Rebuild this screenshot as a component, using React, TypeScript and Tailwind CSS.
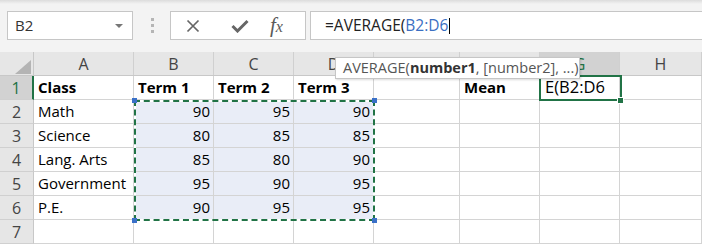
import React from 'react';

const cols = [
  { key: 'A', w: 'w-[100px]' },
  { key: 'B', w: 'w-[80px]' },
  { key: 'C', w: 'w-[80px]' },
  { key: 'D', w: 'w-[80px]' },
  { key: 'E', w: 'w-[86px]' },
  { key: 'F', w: 'w-[80px]' },
  { key: 'G', w: 'w-[80px]' },
  { key: 'H', w: 'w-[82px]' },
];

type Cell = { text?: string; bold?: boolean; num?: boolean; edit?: boolean };

const rows: Cell[][] = [
  [{ text: 'Class', bold: true }, { text: 'Term 1', bold: true }, { text: 'Term 2', bold: true }, { text: 'Term 3', bold: true }, {}, { text: 'Mean', bold: true }, { text: 'E(B2:D6', edit: true }, {}],
  [{ text: 'Math' }, { text: '90', num: true }, { text: '95', num: true }, { text: '90', num: true }, {}, {}, {}, {}],
  [{ text: 'Science' }, { text: '80', num: true }, { text: '85', num: true }, { text: '85', num: true }, {}, {}, {}, {}],
  [{ text: 'Lang. Arts' }, { text: '85', num: true }, { text: '80', num: true }, { text: '90', num: true }, {}, {}, {}, {}],
  [{ text: 'Government' }, { text: '95', num: true }, { text: '90', num: true }, { text: '95', num: true }, {}, {}, {}, {}],
  [{ text: 'P.E.' }, { text: '90', num: true }, { text: '95', num: true }, { text: '95', num: true }, {}, {}, {}, {}],
  [{}, {}, {}, {}, {}, {}, {}, {}],
];

const FormulaBar = () => (
  <div className="h-[52px] bg-[#f3f3f3]">
    <div className="h-[4px] bg-gradient-to-b from-[#dcdcdc] to-[#f3f3f3]" />
    <div className="flex items-center pt-[7px]">
      <div className="ml-[7px] w-[126px] h-[29px] bg-white border border-[#c6c6c6] flex items-center justify-between pl-[7px] pr-[9px]">
        <span className="text-[15px] text-[#333]">B2</span>
        <span className="w-0 h-0 border-l-[4px] border-r-[4px] border-t-[4px] border-l-transparent border-r-transparent border-t-[#777]" />
      </div>
      <div className="ml-[18px] w-[2px] flex flex-col gap-[3px]">
        <span className="w-[3px] h-[3px] bg-[#b5b5b5]" />
        <span className="w-[3px] h-[3px] bg-[#b5b5b5]" />
        <span className="w-[3px] h-[3px] bg-[#b5b5b5]" />
      </div>
      <div className="ml-[17px] w-[136px] h-[29px] bg-white border border-[#c6c6c6] flex items-center">
        <svg className="ml-[15px]" width="14" height="14" viewBox="0 0 14 14">
          <path d="M1.5 1.5 L12.5 12.5 M12.5 1.5 L1.5 12.5" stroke="#666" strokeWidth="1.7" fill="none" />
        </svg>
        <svg className="ml-[31px]" width="18" height="14" viewBox="0 0 18 14">
          <path d="M1.5 7 L6.5 12 L16.5 2" stroke="#666" strokeWidth="3" fill="none" />
        </svg>
        <span className="ml-[21px] text-[21px] italic text-[#5a5a5a] font-['Liberation_Serif',serif] leading-none">
          f<span className="text-[16px]">x</span>
        </span>
      </div>
      <div className="ml-[4px] flex-1 h-[29px] bg-white border border-r-0 border-[#c6c6c6] flex items-center pl-[14px] text-[15.5px]">
        <span className="text-[#222]">=AVERAGE(</span>
        <span className="text-[#3b6fc2]">B2:D6</span>
        <span className="ml-[1px] w-[1px] h-[16px] bg-black" />
      </div>
    </div>
  </div>
);

const Grid = () => (
  <div>
    <div className="flex h-[24px] bg-[#e6e6e6] border-b border-[#c8c8c8]">
      <div className="w-[34px] border-r border-[#c8c8c8] relative">
        <svg className="absolute left-[15px] top-[8px]" width="16" height="14" viewBox="0 0 16 14">
          <path d="M16 0 L16 14 L0 14 Z" fill="#b4b4b4" />
        </svg>
      </div>
      {cols.map((c) => (
        <div
          key={c.key}
          className={`${c.w} border-r border-[#d0d0d0] flex items-center justify-center text-[16px] ${c.key === 'G' ? 'bg-[#d2d2d2] text-[#217346]' : 'text-[#444]'}`}
        >
          {c.key}
        </div>
      ))}
    </div>
    {rows.map((r, i) => (
      <div key={i} className="flex h-[24px]">
        <div
          className={`w-[34px] border-b border-[#d0d0d0] flex items-center justify-center text-[16px] ${i === 0 ? 'bg-[#d2d2d2] text-[#217346] border-r-2 border-r-[#217346]' : 'bg-[#e6e6e6] text-[#444] border-r border-r-[#c8c8c8]'}`}
        >
          {i + 1}
        </div>
        {r.map((cell, j) => {
          const sel = i >= 1 && i <= 5 && j >= 1 && j <= 3;
          return (
            <div
              key={j}
              className={`${cols[j].w} border-r border-b border-[#d4d4d4] flex items-center overflow-visible whitespace-nowrap text-black ${cell.edit ? 'text-[16.5px] pl-[5px]' : 'text-[15px]'} ${sel ? 'bg-[#e9edf7]' : 'bg-white'} ${cell.num ? 'justify-end pr-[3px]' : 'pl-[4px]'} ${cell.bold ? 'font-bold' : ''}`}
            >
              {cell.text}
            </div>
          );
        })}
      </div>
    ))}
  </div>
);

export default function App() {
  return (
    <div className="relative w-[702px] h-[245px] overflow-hidden bg-white font-['Segoe_UI','Open_Sans',sans-serif]">
      <FormulaBar />
      <Grid />

      {/* copy marquee over B2:D6 */}
      <div className="absolute left-[134px] top-[100px] w-[241px] h-[121px] border-2 border-white" />
      <div className="absolute left-[134px] top-[100px] w-[241px] h-[121px] border-2 border-dashed border-[#217346]" />
      <div className="absolute left-[132px] top-[98px] w-[5px] h-[5px] bg-[#3a70c8]" />
      <div className="absolute left-[372px] top-[98px] w-[5px] h-[5px] bg-[#3a70c8]" />
      <div className="absolute left-[132px] top-[218px] w-[5px] h-[5px] bg-[#3a70c8]" />
      <div className="absolute left-[372px] top-[218px] w-[5px] h-[5px] bg-[#3a70c8]" />

      {/* active cell G1 */}
      <div className="absolute left-[539px] top-[75px] w-[83px] h-[26px] border-2 border-[#217346]" />
      <div className="absolute left-[617px] top-[97px] w-[7px] h-[7px] bg-[#217346] border border-white" />

      {/* function tooltip */}
      <div className="absolute left-[335px] top-[57px] w-[245px] h-[22px] bg-white border border-[#c6c6c6] shadow-[1px_1px_2px_rgba(0,0,0,0.15)] flex items-center pl-[7px] text-[14.5px] text-[#555] whitespace-nowrap">
        AVERAGE(<span className="font-bold text-[#333]">number1</span>, [number2], ...)
      </div>
    </div>
  );
}
